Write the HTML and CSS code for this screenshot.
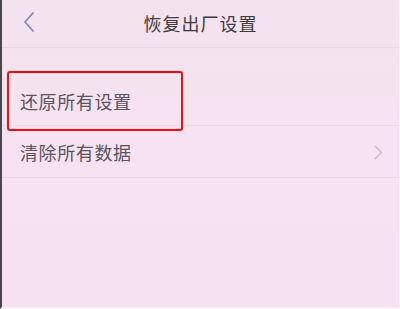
FILE: index.html
```html
<!DOCTYPE html>
<html lang="zh-CN">
<head>
  <meta charset="UTF-8" />
  <meta name="viewport" content="width=device-width, initial-scale=1.0" />
  <title>恢复出厂设置</title>
  <link rel="stylesheet" href="styles.css">
</head>
<body>
  <div class="ekran">
    <div class="ust-bar">
      <span class="geri">
        <svg width="12" height="20" viewBox="0 0 12 20">
          <path d="M10 1 L2 10 L10 19" fill="none" stroke="#7f86d6" stroke-width="1.8" stroke-linecap="round" stroke-linejoin="round"/>
        </svg>
      </span>
      <span class="baslik">恢复出厂设置</span>
    </div>

    <div class="liste">
      <div class="satir secili">
        <span class="satir-yazi">还原所有设置</span>
        <div class="kirmizi-kutu"></div>
      </div>
      <div class="satir">
        <span class="satir-yazi">清除所有数据</span>
        <svg class="ok" width="9" height="15" viewBox="0 0 9 15">
          <path d="M1.5 1.5 L7.5 7.5 L1.5 13.5" fill="none" stroke="#c4b8c6" stroke-width="1.4" stroke-linecap="round" stroke-linejoin="round"/>
        </svg>
      </div>
    </div>
  </div>
</body>
</html>
```

FILE: styles.css
```css
* { margin: 0; padding: 0; box-sizing: border-box; }
body {
  font-family: "Noto Sans CJK SC", "Noto Sans", sans-serif;
  background-color: #f6e2f0;
}

.ekran {
  width: 400px;
  height: 309px;
  border-left: 2px solid #4a4650;
  border-right: 1px solid #fbf3f8;
  border-bottom: 2px solid #fbf3f8;
  background: linear-gradient(180deg, #f3e3ee 0%, #f6e2f0 40%, #f5e1ef 100%);
  overflow: hidden;
}

.ust-bar {
  height: 48px;
  display: flex;
  align-items: center;
  justify-content: center;
  position: relative;
  border-bottom: 1px solid #ead8e4;
}

.geri {
  position: absolute;
  left: 21px;
  top: 12px;
  display: flex;
}

.baslik {
  font-size: 18px;
  color: #3e3a40;
  letter-spacing: 1px;
  margin-top: -2px;
}

.liste {
  margin-top: 26px;
}

.satir {
  height: 52px;
  display: flex;
  align-items: center;
  justify-content: space-between;
  padding: 0 16px 0 18px;
  border-bottom: 1px solid #ebd7e4;
  position: relative;
}

.satir-yazi {
  font-size: 18px;
  color: #5a5560;
  letter-spacing: 0.6px;
}

.secili .satir-yazi {
  margin-top: 2px;
}

.kirmizi-kutu {
  position: absolute;
  left: 5px;
  top: -3px;
  width: 176px;
  height: 60px;
  border: 2.5px solid #f40d0d;
  border-radius: 3px;
}

.ok {
  margin-top: 1px;
}
```
